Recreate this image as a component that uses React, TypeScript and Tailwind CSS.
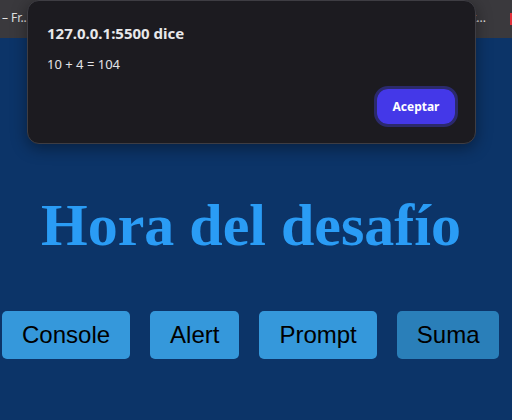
import React from 'react';

const buttons = ['Console', 'Alert', 'Prompt', 'Suma'];

const AlertDialog: React.FC = () => (
  <div className="absolute left-[27px] top-0 w-[449px] h-[144px] rounded-[12px] bg-[#1c1b20] border border-[#3e3d43] shadow-[0_4px_16px_rgba(0,0,0,0.4)] font-['Noto_Sans',sans-serif]">
    <div className="pl-[19px] pt-[22px]">
      <p className="text-[15px] font-bold text-[#e8e8ea] leading-[20px]">127.0.0.1:5500 dice</p>
      <p className="mt-[12px] text-[13px] text-[#e3e3e6] leading-[18px]">10 + 4 = 104</p>
    </div>
    <div className="absolute right-[17px] bottom-[16px] rounded-[14px] border-[3px] border-[#2b2a6c]">
      <button className="h-[35px] w-[78px] rounded-[11px] bg-[#4438e8] text-white text-[12px] font-bold">
        Aceptar
      </button>
    </div>
  </div>
);

export default function App() {
  return (
    <div className="relative w-[512px] h-[420px] overflow-hidden bg-[#0c3468]">
      <div className="h-[38px] bg-[#3a393d] flex items-center justify-between font-['Noto_Sans',sans-serif] text-[12px] text-[#e2e2e2]">
        <span className="pl-[2px] pb-[2px]">– Fr...</span>
        <div className="flex items-center">
          <span className="pb-[2px] mr-[24px]">t...</span>
          <span className="w-[2px] h-[12px] bg-[#e0303a]"></span>
        </div>
      </div>
      <div className="flex flex-col items-center">
        <h1 className="mt-[157px] pr-[10px] text-[60px] leading-none font-bold text-[#2a9cf5] font-['Liberation_Serif',serif]">
          Hora del desafío
        </h1>
        <div className="mt-[56px] self-start pl-[2px] flex gap-[20px]">
          {buttons.map((b) => (
            <button
              key={b}
              className={`h-[48px] px-[20px] rounded-[5px] text-[24px] text-black font-['Liberation_Sans',sans-serif] ${b === 'Suma' ? 'bg-[#2a7fb9]' : 'bg-[#3598db]'}`}
            >
              {b}
            </button>
          ))}
        </div>
      </div>
      <AlertDialog />
    </div>
  );
}
